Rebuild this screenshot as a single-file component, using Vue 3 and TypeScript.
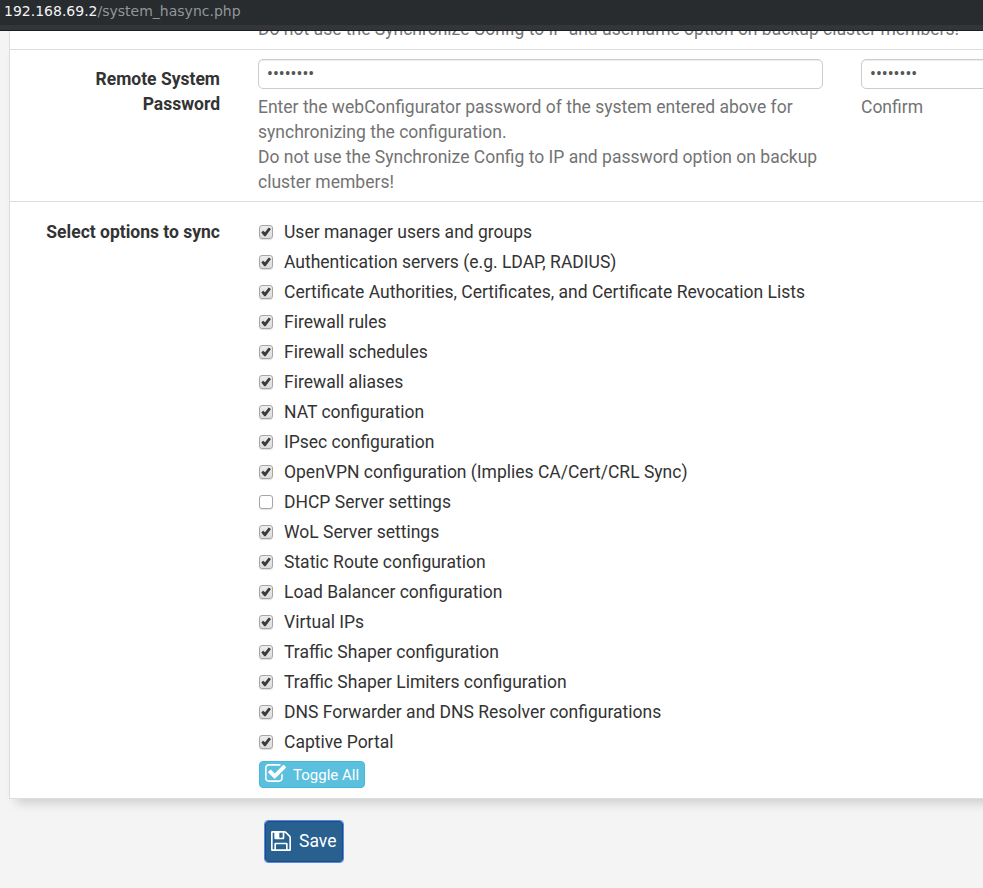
<script setup lang="ts">
import { ref } from 'vue'

interface SyncOption {
  label: string
  checked: boolean
}

const password = ref('password')
const confirmation = ref('password')

const options = ref<SyncOption[]>([
  { label: 'User manager users and groups', checked: true },
  { label: 'Authentication servers (e.g. LDAP, RADIUS)', checked: true },
  { label: 'Certificate Authorities, Certificates, and Certificate Revocation Lists', checked: true },
  { label: 'Firewall rules', checked: true },
  { label: 'Firewall schedules', checked: true },
  { label: 'Firewall aliases', checked: true },
  { label: 'NAT configuration', checked: true },
  { label: 'IPsec configuration', checked: true },
  { label: 'OpenVPN configuration (Implies CA/Cert/CRL Sync)', checked: true },
  { label: 'DHCP Server settings', checked: false },
  { label: 'WoL Server settings', checked: true },
  { label: 'Static Route configuration', checked: true },
  { label: 'Load Balancer configuration', checked: true },
  { label: 'Virtual IPs', checked: true },
  { label: 'Traffic Shaper configuration', checked: true },
  { label: 'Traffic Shaper Limiters configuration', checked: true },
  { label: 'DNS Forwarder and DNS Resolver configurations', checked: true },
  { label: 'Captive Portal', checked: true },
])

function toggleAll(): void {
  const next = !options.value.every((o) => o.checked)
  options.value.forEach((o) => (o.checked = next))
}
</script>

<template>
  <div class="page">
    <header class="address-bar">
      <span class="host">192.168.69.2</span><span class="path">/system_hasync.php</span>
    </header>

    <main class="viewport">
      <section class="panel">
        <div class="row row-username">
          <div class="name"></div>
          <p class="help">Do not use the Synchronize Config to IP and username option on backup cluster members!</p>
        </div>

        <div class="row row-password">
          <div class="name">Remote System<br />Password</div>
          <div class="field">
            <input v-model="password" class="control" type="password" />
            <p class="help">
              Enter the webConfigurator password of the system entered above for synchronizing the configuration.<br />
              Do not use the Synchronize Config to IP and password option on backup cluster members!
            </p>
          </div>
          <div class="field">
            <input v-model="confirmation" class="control" type="password" />
            <p class="help">Confirm</p>
          </div>
        </div>

        <div class="row row-options">
          <div class="name">Select options to sync</div>
          <div class="options">
            <label v-for="option in options" :key="option.label" class="option">
              <input v-model="option.checked" class="native" type="checkbox" />
              <span class="box" :class="{ on: option.checked }">
                <svg v-if="option.checked" viewBox="0 0 14 14">
                  <path d="M2.300 7.500 4.100 5.700 6 7.300 9.700 2.600 12 3.900 6.600 11.200 5.300 11.200Z" />
                </svg>
              </span>
              <span>{{ option.label }}</span>
            </label>
            <button class="toggle" type="button" @click="toggleAll">
              <svg viewBox="64 128 1664 1408">
                <path d="M1472 930v318q0 119-84.500 203.500t-203.500 84.500h-832q-119 0-203.500-84.500t-84.500-203.500v-832q0-119 84.500-203.500t203.500-84.500h832q63 0 117 25 15 7 18 23 3 17-9 29l-49 49q-10 10-23 10-3 0-9-2-23-6-45-6h-832q-66 0-113 47t-47 113v832q0 66 47 113t113 47h832q66 0 113-47t47-113v-254q0-13 9-22l64-64q10-10 23-10 6 0 12 3 20 8 20 29zm231-489l-814 814q-24 24-57 24t-57-24l-430-430q-24-24-24-57t24-57l110-110q24-24 57-24t57 24l263 263 647-647q24-24 57-24t57 24l110 110q24 24 24 57t-24 57z" />
              </svg>
              <span>Toggle All</span>
            </button>
          </div>
        </div>
      </section>

      <button class="save" type="submit">
        <svg viewBox="0 128 1536 1536">
          <path d="M384 1536h768v-384h-768v384zm896 0h128v-896q0-14-10-38.500t-20-34.500l-281-281q-10-10-34-20t-39-10v416q0 40-28 68t-68 28h-576q-40 0-68-28t-28-68v-416h-128v1280h128v-416q0-40 28-68t68-28h832q40 0 68 28t28 68v416zm-384-928v-320q0-13-9.500-22.500t-22.500-9.500h-192q-13 0-22.500 9.500t-9.500 22.500v320q0 13 9.500 22.500t22.500 9.500h192q13 0 22.500-9.500t9.500-22.500zm640 32v928q0 40-28 68t-68 28h-1344q-40 0-68-28t-28-68v-1344q0-40 28-68t68-28h928q40 0 88 20t76 48l280 280q28 28 48 76t20 88z" />
        </svg>
        <span>Save</span>
      </button>
    </main>
  </div>
</template>

<style>
body {
  margin: 0;
  overflow: hidden;
}
</style>

<style scoped>
.page {
  display: flex;
  flex-direction: column;
  height: 888px;
  overflow: hidden;
  background: #f4f4f4;
  color: #333;
  font: 17.5px/25px Roboto, sans-serif;
}

.address-bar {
  box-sizing: border-box;
  flex: none;
  height: 31px;
  padding-left: 4px;
  border-bottom: 1px solid #1d1d1f;
  background: linear-gradient(#282c2f 25px, #323639 25px);
  font: 14px/22px "DejaVu Sans", sans-serif;
  white-space: nowrap;
}

.host {
  color: #f3f4f5;
}

.path {
  color: #939699;
}

.viewport {
  flex: 1;
  overflow: hidden;
}

.panel {
  width: 1190px;
  margin-left: 9px;
  border: 1px solid #ddd;
  border-top: 0;
  background: #fff;
  box-shadow: 0 11px 10px -7px rgba(0, 0, 0, 0.16);
}

.row {
  display: grid;
  grid-template-columns: 210px 565px 565px;
  column-gap: 38px;
  box-sizing: border-box;
  border-bottom: 1px solid #ddd;
}

.row:last-child {
  border-bottom: 0;
}

.row-username {
  grid-template-rows: 18px;
  height: 19px;
  align-items: end;
}

.row-username .help {
  grid-column: 2 / 4;
  padding-bottom: 7px;
  white-space: nowrap;
}

.row-password {
  height: 152px;
  padding-top: 9px;
}

.row-options {
  height: 596px;
  padding-top: 15px;
}

.name {
  font-weight: 700;
  text-align: right;
}

.row-password .name {
  padding-top: 8px;
}

.row-options .name {
  padding-top: 3px;
}

.help {
  margin: 0;
  color: #737373;
}

.field .help {
  padding-top: 6px;
}

.control {
  display: block;
  box-sizing: border-box;
  width: 100%;
  height: 30px;
  padding: 0 8px;
  border: 1px solid #ccc;
  border-radius: 5px;
  background: #fff;
  box-shadow: inset 0 1px 1px rgba(0, 0, 0, 0.075);
  color: #555;
  font: 17.5px Roboto, sans-serif;
  outline: 0;
}

.options {
  display: flex;
  flex-direction: column;
  align-items: flex-start;
}

.option {
  display: flex;
  align-items: center;
  gap: 11px;
  height: 30px;
  padding-left: 1px;
  white-space: nowrap;
}

.native {
  display: none;
}

.box {
  box-sizing: border-box;
  width: 14px;
  height: 14px;
  border: 1px solid #a6a6a6;
  border-radius: 3px;
  background: #fff;
  box-shadow: 0 1px 1px rgba(0, 0, 0, 0.12);
}

.box.on {
  background: linear-gradient(#ececec, #dcdcdc);
}

.box svg {
  display: block;
  width: 14px;
  height: 14px;
  margin: -1px;
  fill: #3c3c3c;
}

.toggle {
  display: flex;
  align-items: center;
  gap: 7px;
  box-sizing: border-box;
  width: 106px;
  height: 27px;
  margin: 4px 0 0 1px;
  padding: 0 5px;
  border: 1px solid #46b8da;
  border-radius: 4px;
  background: #5bc0de;
  color: #fff;
  font: 15px/25px Roboto, sans-serif;
  white-space: nowrap;
}

.toggle span {
  padding-top: 2px;
}

.toggle svg {
  flex: none;
  width: 21px;
  height: 18px;
  margin-top: -3px;
  fill: #fff;
}

.save {
  display: flex;
  align-items: center;
  gap: 8px;
  box-sizing: border-box;
  width: 78px;
  height: 41px;
  margin: 22px 0 0 265px;
  padding: 0 5px 1px;
  border: 1px solid #204d74;
  border-radius: 3px;
  outline: 1px solid #568af2;
  background: #286090;
  color: #fff;
  font: 17.5px/25px Roboto, sans-serif;
}

.save svg {
  flex: none;
  width: 20px;
  height: 20px;
  fill: #fff;
}
</style>
